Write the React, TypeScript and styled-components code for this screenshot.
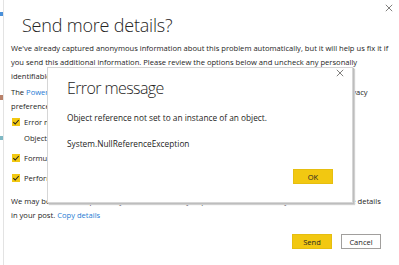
import React from "react";
import styled, { createGlobalStyle } from "styled-components";

const GlobalStyle = createGlobalStyle`
  html, body {
    margin: 0;
    padding: 0;
    background: #ffffff;
  }
  body {
    font-family: "Segoe UI", "Open Sans", sans-serif;
    color: #252423;
  }
`;

const CloseIcon = ({ size = 8 }: { size?: number }) => (
  <svg width={size} height={size} viewBox="0 0 10 10">
    <path d="M1 1 L9 9 M9 1 L1 9" stroke="#605e5c" strokeWidth="1" fill="none" />
  </svg>
);

const CheckIcon = () => (
  <svg width="8" height="8" viewBox="0 0 8 8">
    <path d="M1.3 4.2 L3.2 6 L6.8 2" stroke="#252423" strokeWidth="1.1" fill="none" />
  </svg>
);

const App: React.FC = () => {
  return (
    <>
      <GlobalStyle />
      <Screen>
        <AppEdge />
        <Dialog>
          <TopBar>
            <CloseButton>
              <CloseIcon />
            </CloseButton>
          </TopBar>
          <Title>Send more details?</Title>

          <Paragraph $top={5}>
            <Line>We've already captured anonymous information about this problem automatically, but it will help us fix it if</Line>
            <Line>you send this additional information. Please review the options below and uncheck any personally</Line>
            <Line>identifiable information that you don't want to send with this report to Microsoft.</Line>
          </Paragraph>

          <Paragraph $top={1.5}>
            <Line>
              The <Link>Power BI Desktop privacy statement</Link> describes how we use this data and how to set your  privacy
            </Line>
            <Line>preferences.</Line>
          </Paragraph>

          <Options>
            <Option>
              <Checkbox>
                <CheckIcon />
              </Checkbox>
              <span>Error message</span>
            </Option>
            <Detail>Object reference not set to an instance of an object.</Detail>
            <Option $gap={3}>
              <Checkbox>
                <CheckIcon />
              </Checkbox>
              <span>Formulas</span>
            </Option>
            <Option $gap={4}>
              <Checkbox>
                <CheckIcon />
              </Checkbox>
              <span>Performance data</span>
            </Option>
          </Options>

          <Paragraph $top={8}>
            <Line>We may be able to respond to your issue faster if you post it to the community forum. Include the details</Line>
            <Line>
              in your post. <Link>Copy details</Link>
            </Line>
          </Paragraph>

          <Footer>
            <Button $primary>Send</Button>
            <Button>Cancel</Button>
          </Footer>
        </Dialog>

        <ErrorBox>
          <ErrorClose>
            <CloseIcon />
          </ErrorClose>
          <ErrorTitle>Error message</ErrorTitle>
          <ErrorText>Object reference not set to an instance of an object.</ErrorText>
          <ErrorText $top={12}>System.NullReferenceException</ErrorText>
          <ErrorFooter>
            <Button $primary>OK</Button>
          </ErrorFooter>
        </ErrorBox>
      </Screen>
    </>
  );
};

export default App;

/* Styled Components */
const Screen = styled.div`
  position: relative;
  width: 399px;
  height: 265px;
  display: flex;
  overflow: hidden;
  background: #ffffff;
`;

const AppEdge = styled.div`
  width: 3px;
  flex-shrink: 0;
  border-right: 1px solid #e3e3e3;
  background: linear-gradient(
    to bottom,
    #ffffff 0px,
    #ffffff 12px,
    #4a90d9 12px,
    #4a90d9 16px,
    #ffffff 16px,
    #ffffff 95px,
    #b9826a 95px,
    #b9826a 100px,
    #ffffff 100px,
    #ffffff 136px,
    #7fb8c4 136px,
    #7fb8c4 140px,
    #ffffff 140px
  );
`;

const Dialog = styled.div`
  flex: 1;
  min-width: 0;
  overflow: hidden;
  display: flex;
  flex-direction: column;
  padding: 0 0 0 7px;
  font-size: 7.6px;
  line-height: 14px;
`;

const TopBar = styled.div`
  height: 12px;
  display: flex;
  justify-content: flex-end;
  padding: 4px 6px 0 0;
`;

const CloseButton = styled.div`
  display: flex;
  width: 8px;
  height: 8px;
`;

const Title = styled.div`
  font-weight: 300;
  font-size: 18px;
  letter-spacing: -0.2px;
  line-height: 22px;
  margin: -2px 0 0 11px;
  color: #252423;
`;

const Paragraph = styled.div<{ $top: number }>`
  display: flex;
  flex-direction: column;
  margin-top: ${({ $top }) => $top}px;
`;

const Line = styled.div`
  white-space: pre;
`;

const Link = styled.span`
  color: #1e7bd3;
`;

const Options = styled.div`
  display: flex;
  flex-direction: column;
  margin-top: 1.5px;
`;

const Option = styled.div<{ $gap?: number }>`
  display: flex;
  align-items: center;
  gap: 4px;
  height: 16px;
  margin-top: ${({ $gap }) => $gap ?? 0}px;
  padding-left: 1px;
  white-space: nowrap;
`;

const Checkbox = styled.div`
  width: 8px;
  height: 8px;
  background: #f2c811;
  display: flex;
  align-items: center;
  justify-content: center;
`;

const Detail = styled.div`
  padding-left: 13px;
  height: 17px;
  line-height: 17px;
  white-space: nowrap;
`;

const Footer = styled.div`
  display: flex;
  justify-content: flex-end;
  gap: 9px;
  padding: 12px 18px 0 0;
`;

const Button = styled.div<{ $primary?: boolean }>`
  box-sizing: border-box;
  width: 40px;
  height: 15px;
  display: flex;
  align-items: center;
  justify-content: center;
  font-size: 7.5px;
  color: #252423;
  background: ${({ $primary }) => ($primary ? "#f2c811" : "#ffffff")};
  border: 1px solid ${({ $primary }) => ($primary ? "#e6be10" : "#a19f9d")};
`;

const ErrorBox = styled.div`
  position: absolute;
  left: 47px;
  top: 67px;
  width: 306px;
  height: 136px;
  box-sizing: border-box;
  background: #ffffff;
  border: 1px solid #d6d6d6;
  box-shadow: 1px 1px 1px #bdbdbd, 2px 2px 1px #d4d4d4;
  padding: 0 0 0 19px;
  display: flex;
  flex-direction: column;
  font-size: 8.3px;
`;

const ErrorClose = styled.div`
  position: absolute;
  top: 1px;
  right: 8px;
  display: flex;
`;

const ErrorTitle = styled.div`
  font-weight: 300;
  font-size: 16px;
  letter-spacing: -0.6px;
  line-height: 22px;
  margin-top: 9px;
`;

const ErrorText = styled.div<{ $top?: number }>`
  line-height: 14px;
  margin-top: ${({ $top }) => $top ?? 12}px;
  white-space: nowrap;
`;

const ErrorFooter = styled.div`
  display: flex;
  justify-content: flex-end;
  padding: 18px 19px 0 0;
`;
